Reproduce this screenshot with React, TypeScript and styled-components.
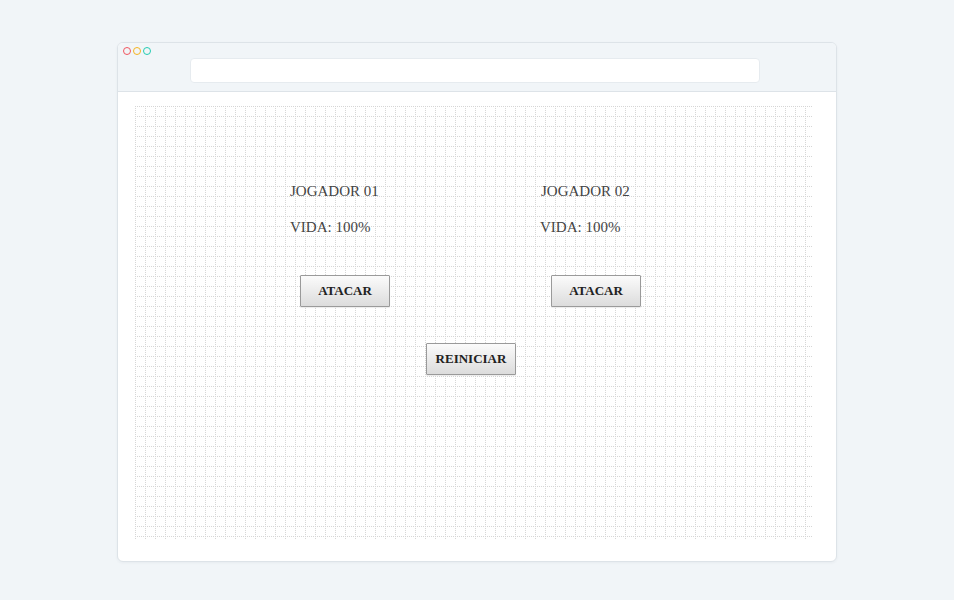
import * as React from 'react';
import styled, { createGlobalStyle } from 'styled-components';

const Global = createGlobalStyle`
  html, body {
    margin: 0;
    padding: 0;
    background: #f1f5f8;
  }
  body {
    font-family: "Liberation Serif", "Times New Roman", serif;
  }
`;

const Page = styled.div`
  display: flex;
  justify-content: center;
  padding-top: 42px;
  height: 600px;
  box-sizing: border-box;
`;

const Window = styled.div`
  width: 720px;
  height: 520px;
  box-sizing: border-box;
  background: #fff;
  border: 1px solid #dde3e8;
  border-radius: 6px;
  box-shadow: 0 1px 3px rgba(30, 50, 70, 0.05);
  display: flex;
  flex-direction: column;
  overflow: hidden;
`;

const TopBar = styled.div`
  height: 49px;
  flex-shrink: 0;
  background: #f1f5f8;
  border-bottom: 1px solid #dde3e8;
  position: relative;
  display: flex;
  align-items: flex-start;
  padding-top: 15px;
  padding-left: 72px;
  box-sizing: border-box;
`;

const Lights = styled.div`
  position: absolute;
  left: 5px;
  top: 4px;
  display: flex;
  gap: 2px;
`;

const Light = styled.span<{ $color: string }>`
  width: 8px;
  height: 8px;
  border-radius: 50%;
  box-sizing: border-box;
  border: 1.5px solid ${p => p.$color};
`;

const Address = styled.div`
  width: 570px;
  height: 25px;
  background: #fff;
  border: 1px solid #e6ebef;
  border-radius: 4px;
  box-sizing: border-box;
`;

const Body = styled.div`
  flex: 1;
  padding: 14px 24px 22px 17px;
`;

const Board = styled.div`
  position: relative;
  width: 677px;
  height: 434px;
  box-sizing: border-box;
  padding: 76px 0 0 155px;

  &::before,
  &::after {
    content: '';
    position: absolute;
    inset: 0;
    pointer-events: none;
  }
  &::before {
    background-image: linear-gradient(to right, #d6d6d6 1px, transparent 1px);
    background-size: 10px 10px;
    -webkit-mask-image: repeating-linear-gradient(to bottom, #000 0 1px, transparent 1px 2px);
    mask-image: repeating-linear-gradient(to bottom, #000 0 1px, transparent 1px 2px);
  }
  &::after {
    background-image: linear-gradient(to bottom, #d6d6d6 1px, transparent 1px);
    background-size: 10px 10px;
    -webkit-mask-image: repeating-linear-gradient(to right, #000 0 1px, transparent 1px 2px);
    mask-image: repeating-linear-gradient(to right, #000 0 1px, transparent 1px 2px);
  }
`;

const Content = styled.div`
  position: relative;
  z-index: 1;
`;

const Players = styled.div`
  display: grid;
  grid-template-columns: 251px 251px;
`;

const Player = styled.div`
  display: flex;
  flex-direction: column;
  align-items: flex-start;
`;

const Label = styled.div<{ $nudge?: number }>`
  font-size: 15px;
  line-height: 18px;
  color: #444;
  margin-left: ${p => p.$nudge ?? 0}px;
`;

const Life = styled(Label)`
  margin-top: 18px;
`;

const Button = styled.button`
  width: 90px;
  height: 32px;
  padding: 0;
  border: 1px solid #9a9a9a;
  border-radius: 1px;
  background: linear-gradient(to bottom, #fbfbfb, #dcdcdc);
  box-shadow: 0 1px 1px rgba(0, 0, 0, 0.08);
  font-family: "Liberation Serif", "Times New Roman", serif;
  font-weight: bold;
  font-size: 13px;
  color: #222;
  cursor: pointer;
`;

const Attack = styled(Button)`
  margin-top: 39px;
  margin-left: 10px;
`;

const Reset = styled(Button)`
  margin-top: 36px;
  margin-left: 136px;
`;

type PlayerProps = { name: string; life: number; nudge?: number };

const PlayerCard = ({ name, life, nudge }: PlayerProps) => (
  <Player>
    <Label>{name}</Label>
    <Life $nudge={nudge}>VIDA: {life}%</Life>
    <Attack>ATACAR</Attack>
  </Player>
);

export default function App() {
  const [players] = React.useState([
    { name: 'JOGADOR 01', life: 100 },
    { name: 'JOGADOR 02', life: 100, nudge: -1 }
  ]);
  return (
    <>
      <Global />
      <Page>
        <Window>
          <TopBar>
            <Lights>
              <Light $color="#f0555f" />
              <Light $color="#f5b31f" />
              <Light $color="#22cbb2" />
            </Lights>
            <Address />
          </TopBar>
          <Body>
            <Board>
              <Content>
                <Players>
                  {players.map(p => (
                    <PlayerCard key={p.name} {...p} />
                  ))}
                </Players>
                <Reset>REINICIAR</Reset>
              </Content>
            </Board>
          </Body>
        </Window>
      </Page>
    </>
  );
}
